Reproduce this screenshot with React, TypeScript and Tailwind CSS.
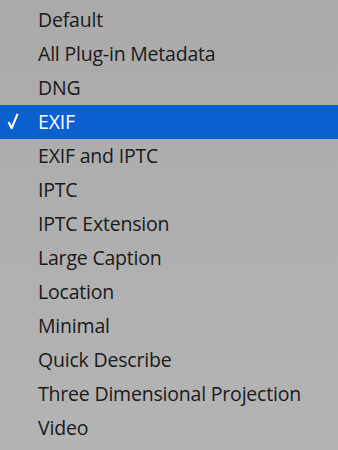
import React from 'react';

const items = [
  'Default',
  'All Plug-in Metadata',
  'DNG',
  'EXIF',
  'EXIF and IPTC',
  'IPTC',
  'IPTC Extension',
  'Large Caption',
  'Location',
  'Minimal',
  'Quick Describe',
  'Three Dimensional Projection',
  'Video',
];

export default function App() {
  const selected = 'EXIF';
  return (
    <div
      className="w-[338px] h-[450px] bg-gradient-to-b from-[#aaaaaa] to-[#b4b4b4] pt-[3px] overflow-hidden"
      style={{ fontFamily: '"Open Sans", "Noto Sans", sans-serif' }}
    >
      {items.map((item) => {
        const active = item === selected;
        return (
          <div
            key={item}
            className={
              active
                ? 'h-[34px] flex items-center bg-[#0b60d0] text-white'
                : 'h-[34px] flex items-center text-[#1a1a1a]'
            }
          >
            <span className="w-[38px] pl-[7px] flex items-center">
              {active && (
                <svg width="12" height="17" viewBox="0 0 12 17" fill="currentColor" className="-mt-[2px]">
                  <path d="M0.6 9.6 L2.4 8.6 L4.6 12.6 L9.6 0.6 L11.6 1.3 L5.4 16 L3.8 16 Z" />
                </svg>
              )}
            </span>
            <span className="text-[19.5px] tracking-[-0.2px]">{item}</span>
          </div>
        );
      })}
    </div>
  );
}
